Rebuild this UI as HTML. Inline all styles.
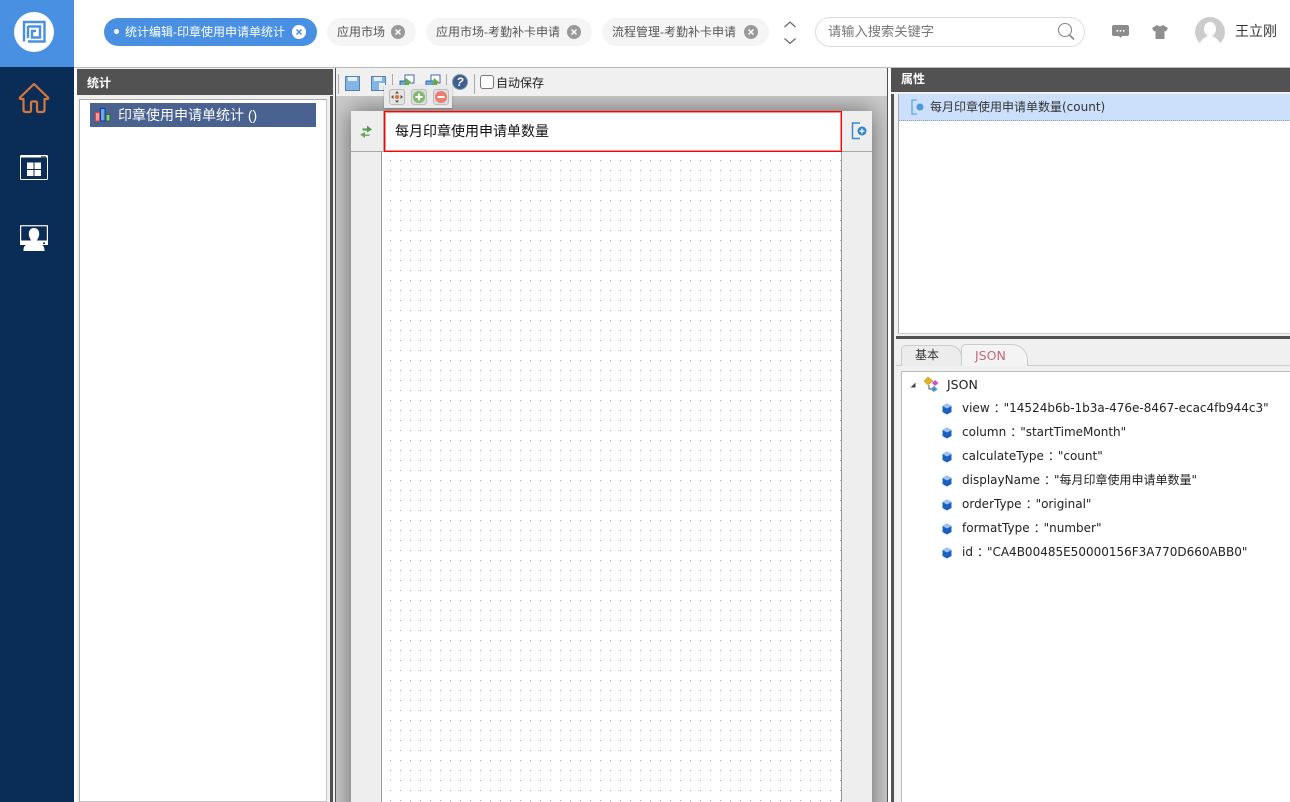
<!DOCTYPE html>
<html lang="zh"><head><meta charset="utf-8"><style>
*{box-sizing:border-box}
html,body{margin:0;padding:0;width:1290px;height:802px;overflow:hidden;background:#fff;font-family:"Liberation Sans","Noto Sans CJK SC",sans-serif;font-size:12px;color:#333}
.a{position:absolute}
.t{position:absolute;white-space:nowrap}
.tab{position:absolute;top:18px;height:28px;border-radius:14px;background:#f5f5f5;color:#555;line-height:28px;font-size:12px;padding-left:10px;white-space:nowrap}
.x{position:absolute;top:7px;width:14px;height:14px;border-radius:50%;background:#999}
.x svg{position:absolute;left:0;top:0}
.row{position:absolute;left:962px;white-space:nowrap;font-family:"DejaVu Sans","Noto Sans CJK SC",sans-serif;font-size:12px;color:#222;height:24px;line-height:24px}
.row i{font-style:normal;display:inline-block;width:14px;position:relative;text-indent:4px;overflow:visible}
.gem{position:absolute;left:942px}
</style></head><body>
<!-- sidebar -->
<div class="a" style="left:0;top:0;width:74px;height:802px;background:#0a2d57"></div>
<div class="a" style="left:0;top:0;width:74px;height:67px;background:#4a90e2"></div>
<div class="a" style="left:14px;top:12px;width:40px;height:40px;border-radius:50%;background:#fff"></div>
<svg class="a" style="left:22px;top:20px" width="24" height="24" viewBox="0 0 24 24" fill="none" stroke="#4a90e2" stroke-width="2.400"><path d="M2 21.500V2H22.500V21.500H6"/><path d="M6 6.500H18V17.500H10V11H14"/><path d="M6 6V18"/></svg>
<svg class="a" style="left:18px;top:82px" width="32" height="32" viewBox="0 0 32 32" fill="none" stroke="#d6773a" stroke-width="2.200" stroke-linejoin="round" stroke-linecap="round"><path d="M16 2L2 15.500Q1 17 3 17H5.500V28Q5.500 30 8 30H11.500Q13 30 13 28V21Q13 19.500 14.500 19.500H17.500Q19 19.500 19 21V28Q19 30 20.500 30H24Q26.500 30 26.500 28V17H29Q31 17 30 15.500Z"/></svg>
<svg class="a" style="left:20px;top:155px" width="28" height="26" viewBox="0 0 28 26"><rect x=".5" y=".5" width="27" height="24" rx="1" fill="none" stroke="#fff"/><rect x="1" y="1" width="26" height="1.500" fill="#fff"/><rect x="21" y="1" width="5" height="1.500" fill="#777"/><rect x="7" y="7.500" width="6.500" height="6.500" fill="#fff"/><rect x="14.500" y="7.500" width="6.500" height="6.500" fill="#fff"/><rect x="7" y="15" width="6.500" height="6" fill="#fff"/><rect x="14.500" y="15" width="6.500" height="6" fill="#fff"/></svg>
<svg class="a" style="left:20px;top:225px" width="28" height="27" viewBox="0 0 28 27"><path d="M1 0H27Q28 0 28 1V20H0V1Q0 0 1 0Z" fill="#fff"/><rect x="1.200" y="1.500" width="25.600" height="14" fill="#0a2d57"/><rect x="1" y="0.500" width="26" height="1" fill="#b8bcc4"/><path d="M14 3C10.500 3 8.800 5.500 8.800 9C8.800 12 10.500 14 11 15.500C11 17 9 18 6 20C4 21 3.500 23 3.500 26H24.500C24.500 23 24 21 22 20C19 18 17 17 17 15.500C17.500 14 19.200 12 19.200 9C19.200 5.500 17.500 3 14 3Z" fill="#fff"/><rect x="23" y="17.500" width="2" height="1.500" fill="#0a2d57"/></svg>
<!-- top tabs -->
<div class="a" style="left:104px;top:18px;width:213px;height:28px;border-radius:14px;background:#4a90e2;color:#fff;line-height:28px;white-space:nowrap"><span class="a" style="left:10px;top:11px;width:5px;height:5px;border-radius:50%;background:#fff"></span><span class="a" style="left:21px;top:0">统计编辑-印章使用申请单统计</span><span class="x" style="left:188px;background:#fff"><svg width="14" height="14" fill="none" stroke="#4a90e2" stroke-width="1.500"><path d="M4.500 4.500L9.500 9.500M9.500 4.500L4.500 9.500"/></svg></span></div>
<div class="tab" style="left:327px;width:89px">应用市场<span class="x" style="left:64px"><svg width="14" height="14" fill="none" stroke="#fff" stroke-width="1.500"><path d="M4.500 4.500L9.500 9.500M9.500 4.500L4.500 9.500"/></svg></span></div>
<div class="tab" style="left:426px;width:166px">应用市场-考勤补卡申请<span class="x" style="left:141px"><svg width="14" height="14" fill="none" stroke="#fff" stroke-width="1.500"><path d="M4.500 4.500L9.500 9.500M9.500 4.500L4.500 9.500"/></svg></span></div>
<div class="tab" style="left:602px;width:167px">流程管理-考勤补卡申请<span class="x" style="left:142px"><svg width="14" height="14" fill="none" stroke="#fff" stroke-width="1.500"><path d="M4.500 4.500L9.500 9.500M9.500 4.500L4.500 9.500"/></svg></span></div>
<svg class="a" style="left:782px;top:20px" width="16" height="25" fill="none" stroke="#666" stroke-width="1.200"><path d="M2.500 7L8 2L13.500 7M2.500 18.500L8 23.500L13.500 18.500"/></svg>
<!-- search -->
<div class="a" style="left:815px;top:17px;width:270px;height:30px;border:1px solid #ddd;border-radius:15px"></div>
<div class="t" style="left:828px;top:23px;font-size:13.250px;line-height:17px;color:#777">请输入搜索关键字</div>
<svg class="a" style="left:1057px;top:22px" width="18" height="19" fill="none" stroke="#888" stroke-width="1.100"><circle cx="8" cy="8" r="6.500"/><path d="M12.500 13L17 17.500" stroke-width="1.600"/></svg>
<svg class="a" style="left:1112px;top:25px" width="17" height="14"><path d="M2 0H15Q17 0 17 2V9Q17 11 15 11H10L8.500 13L7 11H2Q0 11 0 9V2Q0 0 2 0Z" fill="#8c8c8c"/><rect x="4.500" y="5" width="1.600" height="1.600" fill="#fff"/><rect x="7.700" y="5" width="1.600" height="1.600" fill="#fff"/><rect x="10.900" y="5" width="1.600" height="1.600" fill="#fff"/></svg>
<svg class="a" style="left:1152px;top:25px" width="16" height="14"><path d="M5 0L8 1.500L11 0L16 3L14 6.500L12.500 6V14H3.500V6L2 6.500L0 3Z" fill="#8f8f8f"/></svg>
<svg class="a" style="left:1195px;top:17px" width="30" height="30"><circle cx="15" cy="15" r="15" fill="#ccc"/><ellipse cx="15" cy="12" rx="6" ry="7" fill="#fff"/><path d="M5 26C7 21 11 21 12 19H18C19 21 23 21 25 26C22 29 18 30 15 30C12 30 8 29 5 26Z" fill="#fff"/></svg>
<div class="t" style="left:1235px;top:22px;font-size:14px;line-height:19px;color:#333">王立刚</div>
<!-- divider -->
<div class="a" style="left:74px;top:67px;width:1216px;height:1px;background:#bbb"></div>
<div class="a" style="left:74px;top:68px;width:1216px;height:734px;background:#f0f0f0"></div>
<div class="a" style="left:74px;top:68px;width:3px;height:734px;background:#fff"></div>
<!-- left panel -->
<div class="a" style="left:77px;top:69px;width:256px;height:26px;background:#525252"></div>
<div class="t" style="left:87px;top:75px;color:#fff;font-weight:bold;line-height:17px">统计</div>
<div class="a" style="left:79px;top:99px;width:248px;height:703px;background:#fff;border:1px solid #c4c4c4;border-top:1px solid #aaa;border-left:1px solid #aaa"></div>
<div class="a" style="left:90px;top:103px;width:226px;height:24px;background:#49628f"></div>
<svg class="a" style="left:95px;top:108px" width="16" height="14"><rect x=".5" y="4.500" width="4" height="8.500" fill="#f99" stroke="#d44"/><rect x="5.500" y=".5" width="4.500" height="12.500" fill="#6ad" stroke="#13b"/><rect x="11" y="6.500" width="4" height="6.500" fill="#8c8" stroke="#363"/></svg>
<div class="t" style="left:118px;top:106px;color:#fff;font-size:14px;line-height:18px">印章使用申请单统计 ()</div>
<div class="a" style="left:330px;top:96px;width:3px;height:706px;background:#525252"></div>
<!-- toolbar -->
<div class="a" style="left:333px;top:68px;width:555px;height:28px;background:#f0f0f0"></div>
<div class="a" style="left:335px;top:68px;width:1px;height:734px;background:#525252"></div>
<div class="a" style="left:338px;top:74px;width:1px;height:20px;background:#aaa"></div>
<svg class="a" style="left:345px;top:76px" width="15" height="15"><rect x=".5" y=".5" width="14" height="14" fill="#82b6e6" stroke="#5a7fa8"/><rect x="3" y="1" width="9" height="4" fill="#e4f0fb"/></svg>
<svg class="a" style="left:371px;top:76px" width="15" height="15"><rect x=".5" y=".5" width="14" height="14" fill="#82b6e6" stroke="#5a7fa8"/><rect x="3" y="1" width="8" height="4" fill="#e4f0fb"/><rect x="8" y="7" width="6" height="7" fill="#eee"/></svg>
<div class="a" style="left:392px;top:74px;width:1px;height:20px;background:#aaa"></div>
<svg class="a" style="left:399px;top:74px" width="16" height="16"><rect x="6" y="1" width="9" height="8" fill="#fff" stroke="#46a"/><rect x="1" y="7" width="8" height="8" fill="#6ad" stroke="#46a"/><path d="M7 4L13 9H10V13H5Z" fill="#6a4"/></svg>
<svg class="a" style="left:425px;top:74px" width="16" height="16"><rect x="6" y="1" width="9" height="8" fill="#fff" stroke="#46a"/><rect x="1" y="7" width="8" height="8" fill="#6ad" stroke="#46a"/><path d="M9 4L15 9H12V13H7Z" fill="#6a4"/></svg>
<div class="a" style="left:446px;top:74px;width:1px;height:20px;background:#aaa"></div>
<div class="a" style="left:452px;top:74px;width:16px;height:16px;border-radius:50%;background:#3f5f92;border:1px solid #8899aa;color:#fff;font:italic bold 12px/14px 'Liberation Sans',sans-serif;text-align:center">?</div>
<div class="a" style="left:474px;top:74px;width:1px;height:20px;background:#aaa"></div>
<div class="a" style="left:480px;top:75px;width:14px;height:14px;border:1px solid #777;border-radius:3px;background:#fff"></div>
<div class="t" style="left:496px;top:75px;line-height:17px;color:#222">自动保存</div>
<!-- canvas -->
<div class="a" style="left:336px;top:96px;width:552px;height:706px;overflow:hidden;background:#cccccc">
<div class="a" style="left:15px;top:15px;width:521px;height:720px;background:#eeeeee;box-shadow:0 0 24px 0 rgba(0,0,0,.5)"></div>
</div>
<div class="a" style="left:351px;top:151px;width:521px;height:1px;background:#aaaaaa"></div>
<svg class="a" style="left:381px;top:152px;background:#fff" width="461" height="650"><defs><pattern id="d" x="-1" y="-2" width="10" height="10" patternUnits="userSpaceOnUse"><rect x="0" y="0" width="1" height="1" fill="#a6a6a6"/></pattern></defs><rect x="0" y="0" width="461" height="650" fill="url(#d)"/><rect x="0" y="0" width="1" height="650" fill="#999"/><rect x="460" y="0" width="1" height="650" fill="#999"/></svg>
<div class="a" style="left:383px;top:111px;width:1px;height:41px;background:#aaaaaa"></div>
<div class="a" style="left:384px;top:111px;width:458px;height:41px;background:#ff0000;padding:1px"><div style="width:100%;height:100%;background:#fff;box-shadow:inset 0 0 0 1px #ff9090"></div></div>
<div class="t" style="left:395px;top:122px;font-size:14px;line-height:19px;color:#111">每月印章使用申请单数量</div>
<svg class="a" style="left:359px;top:124px" width="14" height="15"><path d="M3 4.500H8V1.500L13 5.500L8 8.500V6.500H4Z" fill="#4f9a4f"/><path d="M11 10.500H6V8L1 10.500L6 14V12H10Z" fill="#6aaa5a"/></svg>
<svg class="a" style="left:851px;top:122px" width="16" height="18"><path d="M9 1H1.500V16.500H9" fill="none" stroke="#3b8ac4" stroke-width="1.500"/><circle cx="11" cy="9" r="4.500" fill="#2f86c5"/><path d="M8.500 9H13.500M11 6.500V11.500" stroke="#fff" stroke-width="1.300"/></svg>
<!-- popup toolbar -->
<div class="a" style="left:384px;top:85px;width:68px;height:23px;background:#eaeaea;box-shadow:0 1px 2px rgba(0,0,0,.25)"></div>
<div class="a" style="left:389px;top:89px;width:16px;height:16px;background:#e4e4e4;border:1px solid #bbb;border-radius:3px"></div>
<svg class="a" style="left:391px;top:91px" width="12" height="12"><path d="M6 0L8 2.500H4ZM6 12L4 9.500H8ZM0 6L2.500 4V8ZM12 6L9.500 8V4Z" fill="#555"/><circle cx="6" cy="6" r="2" fill="#e8702a"/></svg>
<div class="a" style="left:411px;top:89px;width:16px;height:16px;background:#ddd;border:1px solid #bbb;border-radius:3px"></div>
<svg class="a" style="left:412px;top:90px" width="14" height="14"><circle cx="7" cy="7" r="6" fill="#7dbb6c"/><path d="M3.500 7H10.500M7 3.500V10.500" stroke="#fff" stroke-width="2"/></svg>
<div class="a" style="left:433px;top:89px;width:16px;height:16px;background:#ddd;border:1px solid #bbb;border-radius:3px"></div>
<svg class="a" style="left:434px;top:90px" width="14" height="14"><circle cx="7" cy="7" r="6" fill="#ee7a72"/><path d="M3.500 7H10.500" stroke="#fff" stroke-width="2"/></svg>
<!-- right panel -->
<div class="a" style="left:888px;top:68px;width:402px;height:734px;background:#f0f0f0"></div>
<div class="a" style="left:887px;top:68px;width:1px;height:734px;background:#525252"></div>
<div class="a" style="left:888px;top:68px;width:3px;height:734px;background:#fff"></div>
<div class="a" style="left:891px;top:68px;width:399px;height:24px;background:#525252"></div>
<div class="t" style="left:901px;top:71px;color:#fff;font-weight:bold;line-height:17px">属性</div>
<div class="a" style="left:891px;top:94px;width:3px;height:708px;background:#525252"></div>
<div class="a" style="left:898px;top:94px;width:392px;height:240px;background:#fff;border-left:1px solid #aaa;border-bottom:1px solid #ccc"></div>
<div class="a" style="left:899px;top:94px;width:391px;height:27px;background:#cce0fc;border-bottom:1px dotted #8899aa"></div>
<svg class="a" style="left:911px;top:99px" width="14" height="16"><path d="M6 1H1V15H6" fill="none" stroke="#5ba8e0" stroke-width="1.300"/><circle cx="9" cy="8" r="3.500" fill="#4a9ad8"/></svg>
<div class="t" style="left:930px;top:99px;line-height:17px;color:#333;font-size:12px;font-family:'DejaVu Sans','Noto Sans CJK SC',sans-serif">每月印章使用申请单数量(count)</div>
<div class="a" style="left:896px;top:336px;width:394px;height:3px;background:#525252"></div>
<div class="a" style="left:896px;top:365px;width:394px;height:1px;background:#ccc"></div>
<div class="a" style="left:901px;top:345px;width:61px;height:21px;background:#ececec;border:1px solid #ccc;border-bottom:0;border-radius:5px 12px 0 0"></div>
<div class="a" style="left:961px;top:344px;width:67px;height:22px;background:#f4f4f4;border:1px solid #ccc;border-bottom:0;border-radius:5px 16px 0 0"></div>
<div class="t" style="left:915px;top:347px;line-height:17px;color:#333">基本</div>
<div class="t" style="left:975px;top:347px;line-height:17px;color:#c0687a;font-family:'DejaVu Sans',sans-serif;font-size:12.500px">JSON</div>
<div class="a" style="left:901px;top:371px;width:389px;height:431px;background:#fff;border:1px solid #bbb;border-right:0;border-bottom:0"></div>
<svg class="a" style="left:909px;top:381px" width="8" height="8"><path d="M6.500 1.500V6.500H1.500Z" fill="#444"/></svg>
<svg class="a" style="left:923px;top:376px" width="17" height="17"><path d="M5 1L10 5L5 9L1 5Z" fill="#e8b020" stroke="#b8860b" stroke-width=".5"/><path d="M12 4L15.500 7L12 10L9 7Z" fill="#d050c8"/><path d="M11 10L14.500 13L11 16L7.500 13Z" fill="#4a8ee0"/><path d="M6 9V13H8" fill="none" stroke="#555"/></svg>
<div class="t" style="left:947px;top:376px;line-height:17px;color:#222;font-family:'DejaVu Sans',sans-serif;font-size:12.500px">JSON</div>
<div class="row" style="top:396px">view<i>：</i>&quot;14524b6b-1b3a-476e-8467-ecac4fb944c3&quot;</div>
<div class="row" style="top:420px">column<i>：</i>&quot;startTimeMonth&quot;</div>
<div class="row" style="top:444px">calculateType<i>：</i>&quot;count&quot;</div>
<div class="row" style="top:468px">displayName<i>：</i>&quot;每月印章使用申请单数量&quot;</div>
<div class="row" style="top:492px">orderType<i>：</i>&quot;original&quot;</div>
<div class="row" style="top:516px">formatType<i>：</i>&quot;number&quot;</div>
<div class="row" style="top:540px">id<i>：</i>&quot;CA4B00485E50000156F3A770D660ABB0&quot;</div>
<svg class="gem" style="top:403px" width="10" height="12"><path d="M5 .5L9.500 3V9L5 11.500L.5 9V3Z" fill="#1b5fc0"/><path d="M5 .5L9.500 3L5 5.500L.5 3Z" fill="#9cc4f0"/></svg>
<svg class="gem" style="top:427px" width="10" height="12"><path d="M5 .5L9.500 3V9L5 11.500L.5 9V3Z" fill="#1b5fc0"/><path d="M5 .5L9.500 3L5 5.500L.5 3Z" fill="#9cc4f0"/></svg>
<svg class="gem" style="top:451px" width="10" height="12"><path d="M5 .5L9.500 3V9L5 11.500L.5 9V3Z" fill="#1b5fc0"/><path d="M5 .5L9.500 3L5 5.500L.5 3Z" fill="#9cc4f0"/></svg>
<svg class="gem" style="top:475px" width="10" height="12"><path d="M5 .5L9.500 3V9L5 11.500L.5 9V3Z" fill="#1b5fc0"/><path d="M5 .5L9.500 3L5 5.500L.5 3Z" fill="#9cc4f0"/></svg>
<svg class="gem" style="top:499px" width="10" height="12"><path d="M5 .5L9.500 3V9L5 11.500L.5 9V3Z" fill="#1b5fc0"/><path d="M5 .5L9.500 3L5 5.500L.5 3Z" fill="#9cc4f0"/></svg>
<svg class="gem" style="top:523px" width="10" height="12"><path d="M5 .5L9.500 3V9L5 11.500L.5 9V3Z" fill="#1b5fc0"/><path d="M5 .5L9.500 3L5 5.500L.5 3Z" fill="#9cc4f0"/></svg>
<svg class="gem" style="top:547px" width="10" height="12"><path d="M5 .5L9.500 3V9L5 11.500L.5 9V3Z" fill="#1b5fc0"/><path d="M5 .5L9.500 3L5 5.500L.5 3Z" fill="#9cc4f0"/></svg>
</body></html>
